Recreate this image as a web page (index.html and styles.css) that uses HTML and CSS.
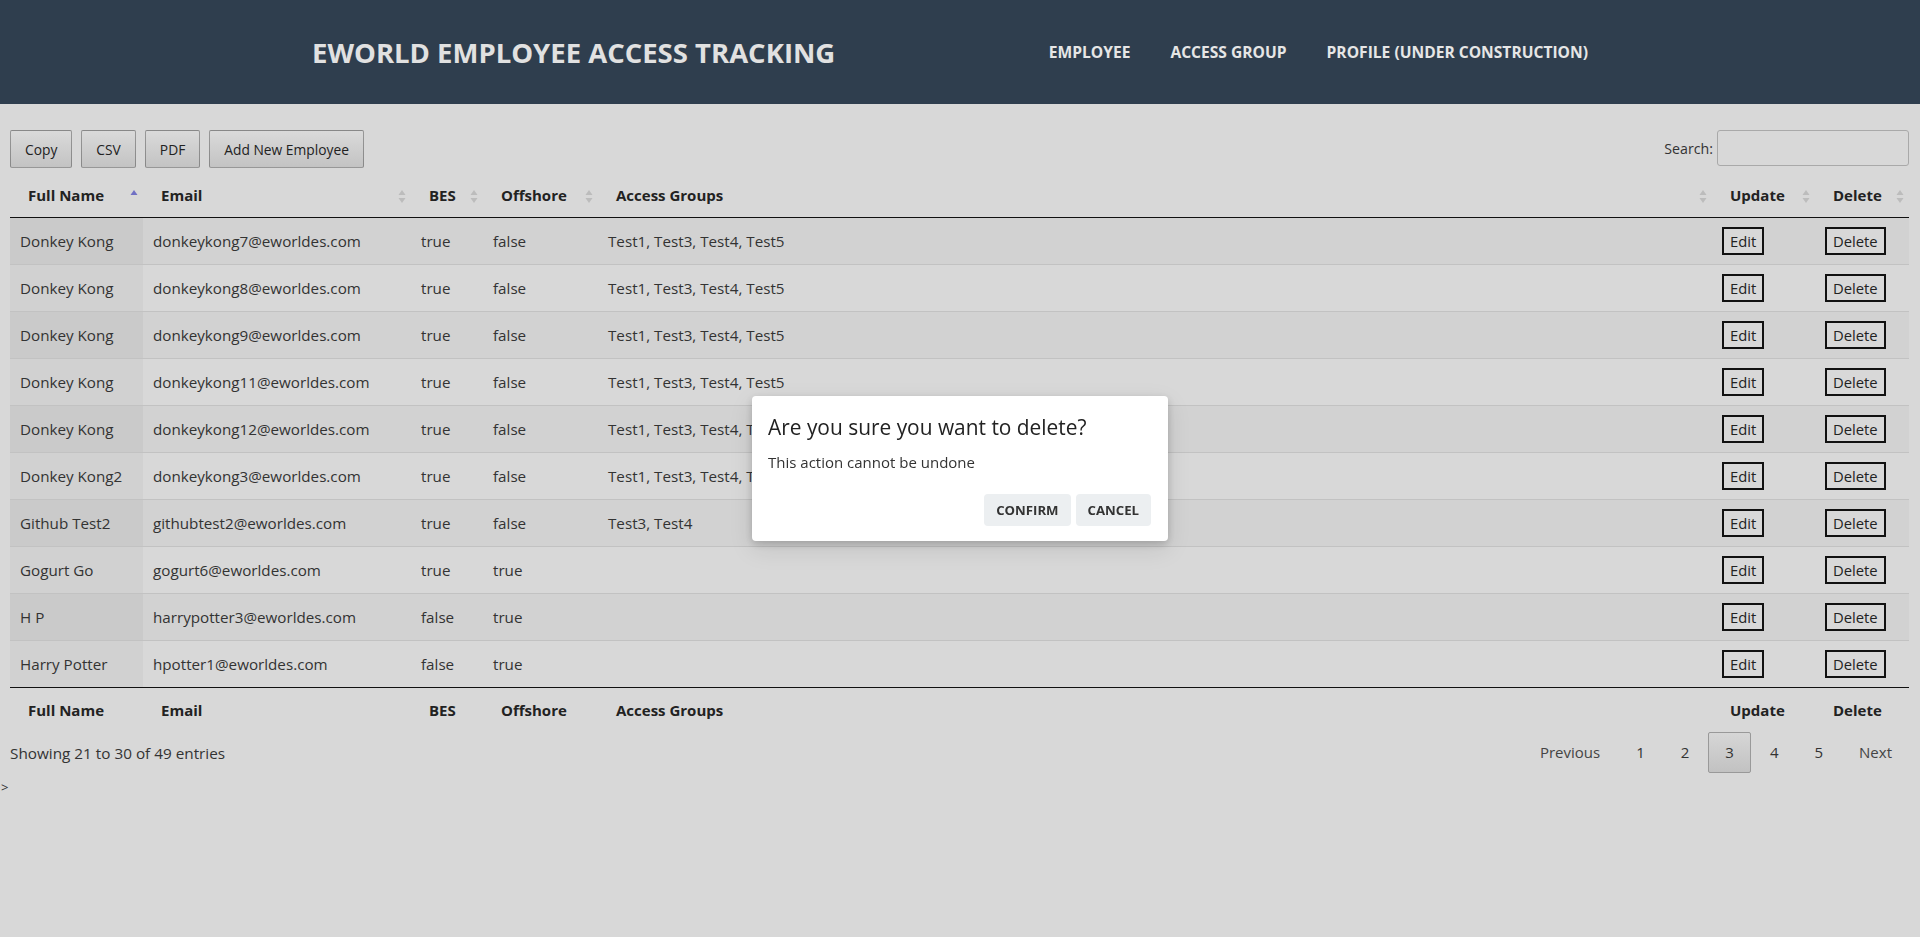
FILE: index.html
```html
<!DOCTYPE html>
<html lang="en">
<head>
<meta charset="utf-8">
<title>Eworld Employee Access Tracking</title>
<link rel="stylesheet" href="styles.css">
</head>
<body>
<header class="topbar">
  <div class="topbar-inner">
    <h1 class="brand">EWORLD EMPLOYEE ACCESS TRACKING</h1>
    <nav class="nav">
      <a href="#">EMPLOYEE</a>
      <a href="#">ACCESS GROUP</a>
      <a href="#">PROFILE (UNDER CONSTRUCTION)</a>
    </nav>
  </div>
</header>

<main class="content">
  <div class="toolbar">
    <div class="dt-buttons">
      <button class="dt-btn">Copy</button>
      <button class="dt-btn">CSV</button>
      <button class="dt-btn">PDF</button>
      <button class="dt-btn">Add New Employee</button>
    </div>
    <label class="search">Search:<input type="search"></label>
  </div>

  <table class="grid">
    <colgroup>
      <col class="c-name"><col class="c-email"><col class="c-bes"><col class="c-off"><col class="c-groups"><col class="c-upd"><col class="c-del">
    </colgroup>
    <thead>
      <tr>
        <th class="sort">Full Name<svg class="sort-ico" viewBox="0 0 8 15" width="8" height="15"><path d="M4 1 L7.5 6 H0.5Z" fill="#7070c4"/></svg></th>
        <th class="sort">Email<svg class="sort-ico" viewBox="0 0 8 15" width="8" height="15"><path d="M4 1 L7.5 6 H0.5Z" fill="#bcbcbc"/><path d="M4 14 L7.5 9 H0.5Z" fill="#bcbcbc"/></svg></th>
        <th class="sort">BES<svg class="sort-ico" viewBox="0 0 8 15" width="8" height="15"><path d="M4 1 L7.5 6 H0.5Z" fill="#bcbcbc"/><path d="M4 14 L7.5 9 H0.5Z" fill="#bcbcbc"/></svg></th>
        <th class="sort">Offshore<svg class="sort-ico" viewBox="0 0 8 15" width="8" height="15"><path d="M4 1 L7.5 6 H0.5Z" fill="#bcbcbc"/><path d="M4 14 L7.5 9 H0.5Z" fill="#bcbcbc"/></svg></th>
        <th class="sort">Access Groups<svg class="sort-ico" viewBox="0 0 8 15" width="8" height="15"><path d="M4 1 L7.5 6 H0.5Z" fill="#bcbcbc"/><path d="M4 14 L7.5 9 H0.5Z" fill="#bcbcbc"/></svg></th>
        <th class="sort">Update<svg class="sort-ico" viewBox="0 0 8 15" width="8" height="15"><path d="M4 1 L7.5 6 H0.5Z" fill="#bcbcbc"/><path d="M4 14 L7.5 9 H0.5Z" fill="#bcbcbc"/></svg></th>
        <th class="sort">Delete<svg class="sort-ico" viewBox="0 0 8 15" width="8" height="15"><path d="M4 1 L7.5 6 H0.5Z" fill="#bcbcbc"/><path d="M4 14 L7.5 9 H0.5Z" fill="#bcbcbc"/></svg></th>
      </tr>
    </thead>
    <tbody>
      <tr><td class="sorted">Donkey Kong</td><td>donkeykong7@eworldes.com</td><td>true</td><td>false</td><td>Test1, Test3, Test4, Test5</td><td><button class="row-btn">Edit</button></td><td><button class="row-btn">Delete</button></td></tr>
      <tr><td class="sorted">Donkey Kong</td><td>donkeykong8@eworldes.com</td><td>true</td><td>false</td><td>Test1, Test3, Test4, Test5</td><td><button class="row-btn">Edit</button></td><td><button class="row-btn">Delete</button></td></tr>
      <tr><td class="sorted">Donkey Kong</td><td>donkeykong9@eworldes.com</td><td>true</td><td>false</td><td>Test1, Test3, Test4, Test5</td><td><button class="row-btn">Edit</button></td><td><button class="row-btn">Delete</button></td></tr>
      <tr><td class="sorted">Donkey Kong</td><td>donkeykong11@eworldes.com</td><td>true</td><td>false</td><td>Test1, Test3, Test4, Test5</td><td><button class="row-btn">Edit</button></td><td><button class="row-btn">Delete</button></td></tr>
      <tr><td class="sorted">Donkey Kong</td><td>donkeykong12@eworldes.com</td><td>true</td><td>false</td><td>Test1, Test3, Test4, Test5</td><td><button class="row-btn">Edit</button></td><td><button class="row-btn">Delete</button></td></tr>
      <tr><td class="sorted">Donkey Kong2</td><td>donkeykong3@eworldes.com</td><td>true</td><td>false</td><td>Test1, Test3, Test4, Test5</td><td><button class="row-btn">Edit</button></td><td><button class="row-btn">Delete</button></td></tr>
      <tr><td class="sorted">Github Test2</td><td>githubtest2@eworldes.com</td><td>true</td><td>false</td><td>Test3, Test4</td><td><button class="row-btn">Edit</button></td><td><button class="row-btn">Delete</button></td></tr>
      <tr><td class="sorted">Gogurt Go</td><td>gogurt6@eworldes.com</td><td>true</td><td>true</td><td></td><td><button class="row-btn">Edit</button></td><td><button class="row-btn">Delete</button></td></tr>
      <tr><td class="sorted">H P</td><td>harrypotter3@eworldes.com</td><td>false</td><td>true</td><td></td><td><button class="row-btn">Edit</button></td><td><button class="row-btn">Delete</button></td></tr>
      <tr><td class="sorted">Harry Potter</td><td>hpotter1@eworldes.com</td><td>false</td><td>true</td><td></td><td><button class="row-btn">Edit</button></td><td><button class="row-btn">Delete</button></td></tr>
    </tbody>
    <tfoot>
      <tr><th>Full Name</th><th>Email</th><th>BES</th><th>Offshore</th><th>Access Groups</th><th>Update</th><th>Delete</th></tr>
    </tfoot>
  </table>

  <div class="table-foot">
    <div class="info">Showing 21 to 30 of 49 entries</div>
    <div class="paginate">
      <a class="pg pg-edge" href="#">Previous</a>
      <a class="pg" href="#">1</a>
      <a class="pg" href="#">2</a>
      <a class="pg current" href="#">3</a>
      <a class="pg" href="#">4</a>
      <a class="pg" href="#">5</a>
      <a class="pg pg-edge" href="#">Next</a>
    </div>
  </div>
</main>
<div class="stray">&gt;</div>

<div class="dialog-layer">
  <div class="dialog" role="dialog">
    <h2 class="dialog-title">Are you sure you want to delete?</h2>
    <p class="dialog-text">This action cannot be undone</p>
    <div class="dialog-actions">
      <button class="dlg-btn">Confirm</button>
      <button class="dlg-btn">Cancel</button>
    </div>
  </div>
</div>
</body>
</html>
```

FILE: styles.css
```css
html, body {
  margin: 0;
  padding: 0;
}
body {
  background: #d8d8d8;
  font-family: "Open Sans", "Noto Sans", sans-serif;
  color: #333;
  font-size: 15.2px;
}

/* top bar */
.topbar {
  background: #2f3e4e;
  height: 104px;
}
.topbar-inner {
  width: 1296px;
  margin: 0 auto;
  height: 100%;
  display: flex;
  align-items: center;
  justify-content: space-between;
}
.brand {
  margin: 0;
  padding-top: 2px;
  font-size: 27.5px;
  line-height: 36px;
  font-weight: 700;
  color: #e1e1e1;
}
.nav {
  display: flex;
  gap: 40px;
  padding-right: 20px;
}
.nav a {
  color: #e6e6e6;
  font-weight: 700;
  font-size: 15.6px;
  line-height: 22px;
  text-decoration: none;
}

/* content */
.content {
  padding: 26px 11px 0 10px;
}
.toolbar {
  display: flex;
  justify-content: space-between;
  align-items: flex-start;
}
.dt-buttons {
  display: flex;
  gap: 9px;
}
.dt-btn {
  height: 38px;
  padding: 0 14px;
  font-family: "Open Sans", sans-serif;
  font-size: 13.8px;
  color: #222;
  border: 1px solid rgba(0, 0, 0, 0.3);
  border-radius: 2px;
  background: linear-gradient(to bottom, #dadada 0%, #c3c3c3 100%);
}
.search {
  display: flex;
  align-items: center;
  gap: 4px;
  height: 36px;
  font-size: 14.2px;
  color: #333;
}
.search input {
  width: 192px;
  height: 36px;
  box-sizing: border-box;
  border: 1px solid #a9a9a9;
  border-radius: 3px;
  background: transparent;
  outline: none;
}

/* table */
.grid {
  margin-top: 7px;
  width: 1899px;
  table-layout: fixed;
  border-collapse: separate;
  border-spacing: 0;
}
.c-name { width: 133px; }
.c-email { width: 268px; }
.c-bes { width: 72px; }
.c-off { width: 115px; }
.c-groups { width: 1114px; }
.c-upd { width: 103px; }
.c-del { width: 94px; }

.grid th {
  text-align: left;
  font-weight: 700;
  font-size: 15px;
  color: #222;
  line-height: 22px;
  white-space: nowrap;
}
.grid thead th {
  padding: 9px 18px 11px;
  border-bottom: 1px solid #111;
}
.grid th.sort {
  position: relative;
}
.sort-ico {
  position: absolute;
  right: 5px;
  top: 14px;
}
.grid tfoot th {
  padding: 11px 18px 5px;
  border-top: 1px solid #111;
}
.grid td {
  padding: 0 10px;
  line-height: 46px;
  font-size: 15.2px;
  color: #333;
  white-space: nowrap;
  background: #d8d8d8;
}
.grid tbody tr:nth-child(odd) td {
  background: #d2d2d2;
}
.grid tbody tr td.sorted {
  background: #d1d1d1;
}
.grid tbody tr:nth-child(odd) td.sorted {
  background: #cacaca;
}
.grid tbody tr + tr td {
  border-top: 1px solid #c2c2c2;
}
.row-btn {
  display: inline-block;
  vertical-align: top;
  margin-top: 9px;
  height: 28px;
  box-sizing: border-box;
  padding: 0 6px;
  font-family: "Open Sans", sans-serif;
  font-size: 14.8px;
  line-height: 22px;
  color: #222;
  background: #d8d8d8;
  border: 2px solid #111;
  border-radius: 0;
}

/* info + pagination */
.table-foot {
  margin-top: 6px;
  display: flex;
  justify-content: space-between;
  align-items: center;
}
.info {
  font-size: 15.3px;
  color: #333;
  line-height: 22px;
}
.paginate {
  display: flex;
  gap: 2px;
}
.pg {
  display: block;
  padding: 8px 16px;
  line-height: 23px;
  font-size: 15px;
  color: #333;
  text-decoration: none;
  border: 1px solid transparent;
  border-radius: 2px;
}
.pg-edge {
  color: #444;
}
.pg.current {
  border-color: #999;
  background: linear-gradient(to bottom, #d6d6d6 0%, #c2c2c2 100%);
}

.stray {
  margin-top: 6px;
  padding-left: 1px;
  font-size: 13px;
  line-height: 16px;
  color: #333;
}

/* dialog */
.dialog-layer {
  position: fixed;
  inset: 0;
  display: flex;
  align-items: center;
  justify-content: center;
}
.dialog {
  width: 416px;
  box-sizing: border-box;
  padding: 18px 17px 15px 16px;
  background: #fff;
  border-radius: 4px;
  box-shadow: 0 3px 8px rgba(0, 0, 0, 0.18), 0 8px 24px rgba(0, 0, 0, 0.1);
}
.dialog-title {
  margin: 0;
  font-size: 20.9px;
  line-height: 26px;
  font-weight: 400;
  color: #222;
}
.dialog-text {
  margin: 11px 0 0;
  font-size: 15px;
  line-height: 22px;
  color: #333;
}
.dialog-actions {
  margin-top: 21px;
  display: flex;
  justify-content: flex-end;
  gap: 5px;
}
.dlg-btn {
  height: 32px;
  padding: 0 12px;
  border: 0;
  border-radius: 4px;
  background: #eceff1;
  font-family: "Open Sans", sans-serif;
  font-weight: 700;
  font-size: 13.2px;
  text-transform: uppercase;
  color: #333;
}
```
